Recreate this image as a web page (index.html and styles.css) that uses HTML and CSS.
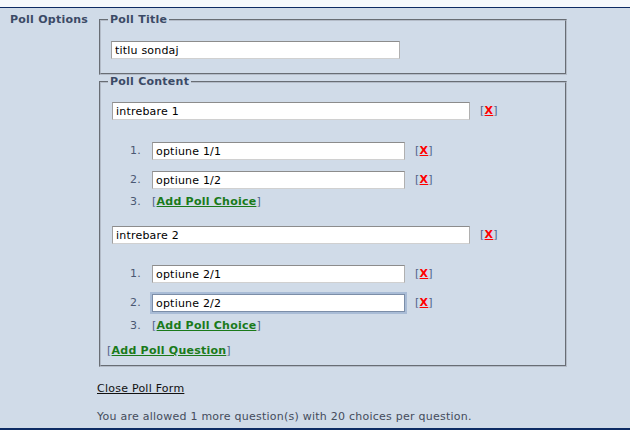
FILE: index.html
```html
<!DOCTYPE html>
<html>
<head>
  <meta charset="UTF-8">
  <meta name="viewport" content="width=device-width, initial-scale=1.0">
  <title>Poll Options</title>
  <link rel="stylesheet" href="styles.css">
</head>
<body>
  <div class="topbar"></div>
  <div class="page">
    <div class="poll-row">
      <div class="poll-label">Poll Options</div>
      <div class="poll-body">
        <fieldset class="poll-title">
          <legend>Poll Title</legend>
          <input type="text" class="title-input" value="titlu sondaj">
        </fieldset>

        <fieldset class="poll-content">
          <legend>Poll Content</legend>

          <div class="question">
            <div class="question-row">
              <input type="text" class="question-input" value="intrebare 1">
              <span class="bracket">[<a href="#" class="remove">X</a>]</span>
            </div>
            <div class="choice first">
              <span class="num">1.</span>
              <input type="text" class="choice-input" value="optiune 1/1">
              <span class="bracket">[<a href="#" class="remove">X</a>]</span>
            </div>
            <div class="choice">
              <span class="num">2.</span>
              <input type="text" class="choice-input" value="optiune 1/2">
              <span class="bracket">[<a href="#" class="remove">X</a>]</span>
            </div>
            <div class="choice add">
              <span class="num">3.</span>
              <span class="bracket">[<a href="#" class="add-link">Add Poll Choice</a>]</span>
            </div>
          </div>

          <div class="question second">
            <div class="question-row">
              <input type="text" class="question-input" value="intrebare 2">
              <span class="bracket">[<a href="#" class="remove">X</a>]</span>
            </div>
            <div class="choice first">
              <span class="num">1.</span>
              <input type="text" class="choice-input" value="optiune 2/1">
              <span class="bracket">[<a href="#" class="remove">X</a>]</span>
            </div>
            <div class="choice">
              <span class="num">2.</span>
              <input type="text" class="choice-input focused" value="optiune 2/2">
              <span class="bracket">[<a href="#" class="remove">X</a>]</span>
            </div>
            <div class="choice add">
              <span class="num">3.</span>
              <span class="bracket">[<a href="#" class="add-link">Add Poll Choice</a>]</span>
            </div>
          </div>

          <div class="add-question">
            <span class="bracket">[<a href="#" class="add-link">Add Poll Question</a>]</span>
          </div>
        </fieldset>

        <a href="#" class="close-link">Close Poll Form</a>
        <p class="allowed">You are allowed 1 more question(s) with 20 choices per question.</p>
      </div>
    </div>
  </div>
</body>
</html>
```

FILE: styles.css
```css
body {
  margin: 0;
  padding: 0;
  height: 430px;
  font-family: "DejaVu Sans", Verdana, sans-serif;
  font-size: 11px;
  line-height: 14px;
  letter-spacing: 0.24px;
  color: #3b4a66;
  background: #d0dbe8;
  border-bottom: 2px solid #0d2b63;
  box-sizing: border-box;
}

.topbar {
  height: 7px;
  background: #f5f8fc;
  border-bottom: 1px solid #0d2b63;
}

.page {
  padding-top: 5px;
}

.poll-row {
  display: flex;
}

.poll-label {
  width: 87px;
  padding-left: 10px;
  font-weight: bold;
  color: #3b4a66;
}

.poll-body {
  width: 470px;
}

fieldset {
  margin: 0 0 0 2px;
  padding: 0 11px;
  border: 2px groove #b4bcc8;
}

legend {
  margin-left: -4px;
  padding: 0 2px;
  font-weight: bold;
  color: #3b4a66;
}

.poll-title {
  padding-top: 14px;
  padding-bottom: 14px;
}

.poll-content {
  padding-top: 13px;
  padding-bottom: 7px;
}

input {
  display: block;
  box-sizing: border-box;
  height: 18px;
  margin: 0;
  padding: 0 3px;
  font-family: "DejaVu Sans", Verdana, sans-serif;
  font-size: 11px;
  letter-spacing: 0.2px;
  color: #000;
  background: #fff;
  border: 1px solid;
  border-color: #8c8c8c #b0b0b0 #d0d0d0 #a0a0a0;
  outline: none;
}

.title-input {
  width: 289px;
  margin-left: -1px;
}

.question-row,
.choice {
  display: flex;
  align-items: center;
}

.question-input {
  width: 358px;
}

.question.second {
  margin-top: 17px;
}

.choice {
  margin-top: 11px;
  padding-left: 18px;
}

.choice.first {
  margin-top: 22px;
}

.question.second .choice.first {
  margin-top: 21px;
}

.choice.add {
  margin-top: 6px;
}

.question.second .choice.add {
  margin-top: 7px;
}

.num {
  width: 22px;
  color: #4a5873;
}

.choice-input {
  width: 253px;
}

.focused {
  border-color: #7c8ea8;
  box-shadow: 0 0 0 2px #a9bcd6;
}

.bracket {
  color: #50628a;
}

.question-row .bracket,
.choice .choice-input + .bracket {
  margin-left: 10px;
}

.remove {
  color: #ff0000;
  font-weight: bold;
  text-decoration: underline;
}

.add-link {
  color: #1a7a1a;
  font-weight: bold;
  text-decoration: underline;
}

.add-question {
  margin-top: 11px;
  margin-left: -5px;
}

.close-link {
  display: inline-block;
  margin-top: 15px;
  color: #111;
  text-decoration: underline;
}

.allowed {
  margin: 14px 0 0 0;
  color: #444c5c;
}
```
